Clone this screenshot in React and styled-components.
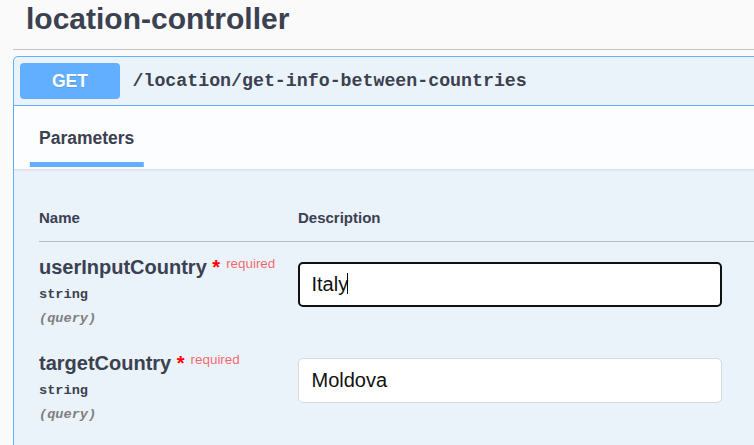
import React from "react";
import styled, { createGlobalStyle } from "styled-components";

const GlobalStyle = createGlobalStyle`
  html, body {
    margin: 0;
    padding: 0;
    background: #fafafa;
    overflow: hidden;
  }
  body {
    font-family: "Liberation Sans", Arial, sans-serif;
    color: #3b4151;
  }
`;

const Page = styled.div`
  width: 860px;
  padding-left: 13px;
`;

const TagTitle = styled.h3`
  margin: 0;
  height: 50px;
  box-sizing: border-box;
  padding: 1px 0 0 13px;
  font-size: 30px;
  line-height: 36px;
  font-weight: 700;
  color: #3b4151;
  border-bottom: 1px solid #c2c4c9;
`;

const OpBlock = styled.div`
  margin-top: 6px;
  border: 1px solid #61affe;
  border-radius: 5px;
  background: rgba(97, 175, 254, 0.1);
`;

const Summary = styled.div`
  display: flex;
  align-items: center;
  padding: 6px;
  border-bottom: 1px solid #61affe;
`;

const Method = styled.span`
  display: flex;
  align-items: center;
  justify-content: center;
  width: 100px;
  height: 36px;
  border-radius: 4px;
  background: #61affe;
  color: #fff;
  font-size: 17.5px;
  font-weight: 700;
  text-shadow: 0 1px 0 rgba(0, 0, 0, 0.1);
`;

const Path = styled.span`
  padding: 0 12.5px;
  font-family: "Liberation Mono", "DejaVu Sans Mono", monospace;
  font-size: 18.25px;
  font-weight: 700;
  color: #3b4151;
`;

const SectionHeader = styled.div`
  display: flex;
  align-items: center;
  height: 63px;
  padding: 0 25px;
  background: rgba(255, 255, 255, 0.8);
  box-shadow: 0 1px 2px rgba(0, 0, 0, 0.1);
`;

const Tab = styled.span`
  position: relative;
  font-size: 17.5px;
  line-height: 20px;
  font-weight: 700;
  color: #3b4151;

  &::after {
    content: "";
    position: absolute;
    left: 50%;
    bottom: -19px;
    width: 120%;
    height: 5px;
    background: #61affe;
    transform: translateX(-50%);
  }
`;

const TableWrap = styled.div`
  padding: 25px;
`;

const Row = styled.div`
  display: grid;
  grid-template-columns: 259px 1fr;
`;

const HeadRow = styled(Row)`
  padding: 15px 0;
  border-bottom: 1px solid rgba(59, 65, 81, 0.3);
  font-size: 15px;
  line-height: 17px;
  font-weight: 700;
  color: #3b4151;
`;

const ParamRow = styled(Row)`
  padding: 13px 0 9px;
`;

const ParamName = styled.div`
  height: 24px;
  font-size: 20px;
  line-height: 24px;
  font-weight: 700;
  color: #3b4151;
  white-space: nowrap;
`;

const Star = styled.span`
  color: #ff0000;
`;

const Required = styled.span`
  position: relative;
  top: -6px;
  padding: 6px;
  font-size: 13.4px;
  line-height: 1;
  font-weight: 400;
  color: rgba(255, 0, 0, 0.6);
`;

const Mono = styled.div`
  font-family: "Liberation Mono", "DejaVu Sans Mono", monospace;
  font-size: 13.6px;
  line-height: 20px;
  font-weight: 700;
`;

const ParamType = styled(Mono)`
  padding: 6px 0 4px;
  color: #3b4151;
`;

const ParamIn = styled(Mono)`
  font-style: italic;
  color: #808080;
`;

const InputWrap = styled.div`
  position: relative;
  width: 424px;
  margin-top: 7px;
`;

const TextInput = styled.input`
  display: block;
  width: 100%;
  height: 45px;
  box-sizing: border-box;
  margin: 0;
  padding: 0 ${(p) => (p.$focused ? "11.5px" : "12.5px")};
  border: ${(p) => (p.$focused ? "2px solid #111" : "1px solid #d9d9d9")};
  border-radius: 5px;
  background: #fff;
  font-family: "Liberation Sans", Arial, sans-serif;
  font-size: 20px;
  color: #111;
  outline: none;
`;

const Caret = styled.span`
  position: absolute;
  left: 49px;
  top: 11px;
  width: 1px;
  height: 21px;
  background: #000;
`;

const params = [
  { name: "userInputCountry", value: "Italy", focused: true },
  { name: "targetCountry", value: "Moldova", focused: false },
];

export default function App() {
  return (
    <>
      <GlobalStyle />
      <Page>
        <TagTitle>location-controller</TagTitle>
        <OpBlock>
          <Summary>
            <Method>GET</Method>
            <Path>/location/get-info-between-countries</Path>
          </Summary>
          <SectionHeader>
            <Tab>Parameters</Tab>
          </SectionHeader>
          <TableWrap>
            <HeadRow>
              <div>Name</div>
              <div>Description</div>
            </HeadRow>
            {params.map((p) => (
              <ParamRow key={p.name}>
                <div>
                  <ParamName>
                    {p.name}
                    <Star>&nbsp;*</Star>
                    <Required>required</Required>
                  </ParamName>
                  <ParamType>string</ParamType>
                  <ParamIn>(query)</ParamIn>
                </div>
                <div>
                  <InputWrap>
                    <TextInput
                      type="text"
                      defaultValue={p.value}
                      $focused={p.focused}
                    />
                    {p.focused && <Caret />}
                  </InputWrap>
                </div>
              </ParamRow>
            ))}
          </TableWrap>
        </OpBlock>
      </Page>
    </>
  );
}
